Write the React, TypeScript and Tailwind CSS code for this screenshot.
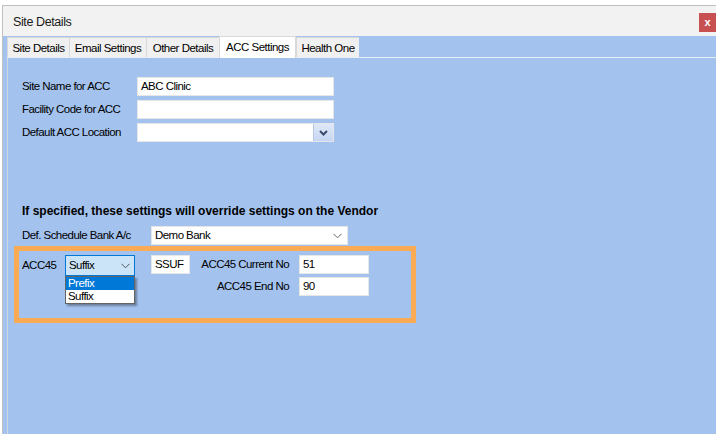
import React from "react";

const F = { fontFamily: '"Liberation Sans", Arial, sans-serif' };

function Chevron({ className = "", color = "#555" }: { className?: string; color?: string }) {
  return (
    <svg width="9" height="6" viewBox="0 0 9 6" className={className}>
      <path d="M0.5 0.8 L4.5 4.8 L8.5 0.8" fill="none" stroke={color} strokeWidth="1" />
    </svg>
  );
}

function BoldChevron() {
  return (
    <svg width="9" height="6" viewBox="0 0 9 6">
      <path d="M1 1 L4.5 4.5 L8 1" fill="none" stroke="#3a4a6b" strokeWidth="2" />
    </svg>
  );
}

const tabs = [
  { label: "Site Details", w: 62 },
  { label: "Email Settings", w: 77 },
  { label: "Other Details", w: 73 },
  { label: "ACC Settings", w: 77, active: true },
  { label: "Health One", w: 63 },
];

function Input({ value = "", w, h = 19 }: { value?: string; w: number; h?: number }) {
  return (
    <div
      className="bg-white border border-[#e6e6e6] flex items-center pl-[3px] text-[11.5px] tracking-[-0.55px] text-black"
      style={{ width: w, height: h }}
    >
      {value}
    </div>
  );
}

export default function App() {
  return (
    <div className="w-[716px] h-[434px] bg-white overflow-hidden" style={F}>
      <div className="mt-[5px] ml-[2px] h-[429px] border-t border-l border-[#bfbfbf] flex flex-col">
        {/* title bar */}
        <div className="h-[30px] bg-[#f2f2f2] flex justify-between shrink-0">
          <div className="pl-[10px] pt-[7px] text-[12.5px] text-[#1a1a1a] tracking-[-0.4px]">Site Details</div>
          <div className="mt-[7px] w-[17px] h-[19px] bg-[#c75050] text-white text-[11px] font-bold flex items-center justify-center leading-none pb-[1px]">
            x
          </div>
        </div>
        {/* tab area */}
        <div className="flex-1 bg-[#a3c2ee] flex flex-col">
          <div className="h-[21px] flex items-end pl-[4px] shrink-0">
            {tabs.map((t) =>
              t.active ? (
                <div
                  key={t.label}
                  className="h-[22px] bg-white border-t border-x border-[#d9d9d9] text-[11.5px] tracking-[-0.5px] text-black flex items-start justify-center pt-[2px] relative z-10 -mb-[1px]"
                  style={{ width: t.w }}
                >
                  {t.label}
                </div>
              ) : (
                <div
                  key={t.label}
                  className="h-[20px] bg-[#f0f0f0] border-t border-l border-[#d9d9d9] text-[11.5px] tracking-[-0.5px] text-black flex items-center justify-center pt-[2px]"
                  style={{ width: t.w }}
                >
                  {t.label}
                </div>
              )
            )}
          </div>
          <div className="h-[1px] bg-[#e8eef8] ml-[4px] shrink-0" />
          {/* panel */}
          <div className="flex-1 ml-[4px] border-l border-[#d0d8e4] pl-[6px] pt-[19px] text-[11.5px] tracking-[-0.55px] text-black relative">
            <div className="ml-[8px] flex flex-col gap-[4px]">
              <div className="flex items-center">
                <div className="w-[115px]">Site Name for ACC</div>
                <Input value="ABC Clinic" w={197} />
              </div>
              <div className="flex items-center">
                <div className="w-[115px]">Facility Code for ACC</div>
                <Input w={197} />
              </div>
              <div className="flex items-center">
                <div className="w-[115px]">Default ACC Location</div>
                <div className="w-[197px] h-[19px] bg-white border border-[#e6e6e6] flex justify-end">
                  <div className="w-[20px] h-full bg-gradient-to-b from-[#dfe8f8] to-[#c6d6f2] border-l border-[#b8c9e8] flex items-center justify-center">
                    <BoldChevron />
                  </div>
                </div>
              </div>
            </div>
            <div className="ml-[8px] mt-[62px] h-[14px] font-bold text-[12px] tracking-[0px] leading-[14px]">
              If specified, these settings will override settings on the Vendor
            </div>
            <div className="ml-[8px] mt-[8px] flex items-center">
              <div className="w-[129px]">Def. Schedule Bank A/c</div>
              <div className="w-[197px] h-[19px] bg-white border border-[#e6e6e6] flex items-center justify-between pl-[3px] pr-[5px]">
                <span>Demo Bank</span>
                <Chevron color="#666" />
              </div>
            </div>
            {/* orange box */}
            <div className="mt-[1px] w-[402px] h-[77px] border-[5px] border-[#fbaa55] pl-[3px] pt-[4px] flex">
              <div className="w-[43px] h-[21px] flex items-center">ACC45</div>
              <div className="relative w-[70px] h-[21px]">
                <div className="w-[70px] h-[21px] bg-[#cce4f7] border border-[#0078d7] flex items-center justify-between pl-[3px] pr-[4px]">
                  <span>Suffix</span>
                  <Chevron color="#555" />
                </div>
                <div className="absolute left-0 top-[21px] w-[70px] bg-white border border-[#646464] shadow-[2px_2px_2px_rgba(0,0,0,0.35)] z-20">
                  <div className="h-[13px] bg-[#0078d7] text-white flex items-center pl-[2px] leading-none">Prefix</div>
                  <div className="h-[13px] flex items-center pl-[2px] leading-none">Suffix</div>
                </div>
              </div>
              <div className="ml-[16px]">
                <Input value="SSUF" w={39} />
              </div>
              <div className="ml-[6px] w-[173px] flex flex-col gap-[3px]">
                <div className="flex items-center">
                  <div className="flex-1 text-right pr-[10px]">ACC45 Current No</div>
                  <Input value="51" w={70} />
                </div>
                <div className="flex items-center">
                  <div className="flex-1 text-right pr-[10px]">ACC45 End No</div>
                  <Input value="90" w={70} />
                </div>
              </div>
            </div>
          </div>
        </div>
      </div>
    </div>
  );
}
